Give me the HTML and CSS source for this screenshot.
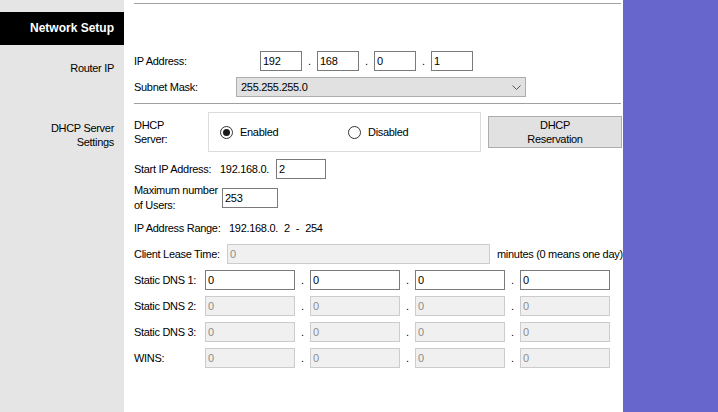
FILE: index.html
```html
<!DOCTYPE html>
<html lang="en">
<head>
<meta charset="utf-8">
<title>Network Setup</title>
<link rel="stylesheet" href="styles.css">
</head>
<body>
<div class="page">
  <aside class="side">
    <div class="side-title">Network Setup</div>
    <div class="side-label side-router">Router IP</div>
    <div class="side-label side-dhcp">DHCP Server<br>Settings</div>
  </aside>

  <main class="main">
    <div class="rule rule-top"></div>

    <div class="row row-ip">
      <span class="lbl w-ip">IP Address:</span>
      <input class="field oct" value="192"><span class="dot">.</span>
      <input class="field oct" value="168"><span class="dot">.</span>
      <input class="field oct" value="0"><span class="dot">.</span>
      <input class="field oct" value="1">
    </div>

    <div class="row row-mask">
      <span class="lbl w-mask">Subnet Mask:</span>
      <div class="select">
        <span>255.255.255.0</span>
        <svg class="chev" width="9" height="5" viewBox="0 0 9 5"><polyline points="0.5,0.5 4.5,4.5 8.5,0.5" fill="none" stroke="#555" stroke-width="1"/></svg>
      </div>
    </div>

    <div class="rule rule-mid"></div>

    <div class="row row-dhcp">
      <span class="lbl lbl-2 w-dhcp">DHCP<br>Server:</span>
      <div class="radio-box">
        <label class="opt"><span class="radio checked"></span><span>Enabled</span></label>
        <label class="opt"><span class="radio"></span><span>Disabled</span></label>
      </div>
      <button class="btn" type="button">DHCP<br>Reservation</button>
    </div>

    <div class="row row-start">
      <span class="lbl w-start">Start IP Address:</span>
      <span class="w-prefix">192.168.0.</span>
      <input class="field f-start" value="2">
    </div>

    <div class="row row-max">
      <span class="lbl lbl-2b w-max">Maximum number<br>of Users:</span>
      <input class="field f-max" value="253">
    </div>

    <div class="row row-range">
      <span class="lbl w-range">IP Address Range:</span>
      <span>192.168.0.</span><span class="r-a">2</span><span class="r-b">-</span><span class="r-c">254</span>
    </div>

    <div class="row row-lease">
      <span class="lbl w-lease">Client Lease Time:</span>
      <input class="field f-lease" value="0" disabled>
      <span class="lease-note">minutes (0 means one day)</span>
    </div>

    <div class="row row-dns first">
      <span class="lbl w-dns">Static DNS 1:</span>
      <input class="field f-dns" value="0"><span class="dot">.</span>
      <input class="field f-dns" value="0"><span class="dot">.</span>
      <input class="field f-dns" value="0"><span class="dot">.</span>
      <input class="field f-dns" value="0">
    </div>
    <div class="row row-dns">
      <span class="lbl w-dns">Static DNS 2:</span>
      <input class="field f-dns" value="0" disabled><span class="dot">.</span>
      <input class="field f-dns" value="0" disabled><span class="dot">.</span>
      <input class="field f-dns" value="0" disabled><span class="dot">.</span>
      <input class="field f-dns" value="0" disabled>
    </div>
    <div class="row row-dns">
      <span class="lbl w-dns">Static DNS 3:</span>
      <input class="field f-dns" value="0" disabled><span class="dot">.</span>
      <input class="field f-dns" value="0" disabled><span class="dot">.</span>
      <input class="field f-dns" value="0" disabled><span class="dot">.</span>
      <input class="field f-dns" value="0" disabled>
    </div>
    <div class="row row-dns">
      <span class="lbl w-dns">WINS:</span>
      <input class="field f-dns" value="0" disabled><span class="dot">.</span>
      <input class="field f-dns" value="0" disabled><span class="dot">.</span>
      <input class="field f-dns" value="0" disabled><span class="dot">.</span>
      <input class="field f-dns" value="0" disabled>
    </div>
  </main>

  <div class="purple"></div>
</div>
</body>
</html>
```

FILE: styles.css
```css
* { box-sizing: border-box; }

body {
  margin: 0;
  background: #fff;
  color: #000;
  font-family: "Liberation Sans", Arial, sans-serif;
  font-size: 11px;
  letter-spacing: -0.3px;
}

.page {
  display: flex;
  height: 412px;
  overflow: hidden;
}

/* sidebar */
.side {
  width: 124px;
  flex: none;
  background: #e5e5e5;
}
.side-title {
  margin-top: 12px;
  height: 33px;
  line-height: 33px;
  background: #000;
  color: #fff;
  font-weight: bold;
  font-size: 12px;
  letter-spacing: 0;
  text-align: right;
  padding-right: 10px;
}
.side-label {
  text-align: right;
  padding-right: 10px;
  line-height: 14px;
}
.side-router { margin-top: 16px; }
.side-dhcp { margin-top: 46px; }

/* main */
.main {
  width: 499px;
  flex: none;
  padding: 0 2px 0 10px;
}
.rule {
  height: 1px;
  background: #a0a0a0;
}
.rule-top { margin-top: 3px; }
.rule-mid { margin-top: 6px; }

.row {
  display: flex;
  align-items: center;
  height: 20px;
  white-space: nowrap;
}
.lbl { flex: none; }
.lbl-2 { line-height: 14px; }
.lbl-2b { line-height: 15px; }

.field {
  flex: none;
  height: 20px;
  margin: 0;
  padding: 0 2px;
  border: 1px solid #7a7a7a;
  background: #fff;
  color: #000;
  font: inherit;
  letter-spacing: inherit;
  outline: none;
}
.field:disabled {
  background: #f0f0f0;
  border-color: #cccccc;
  color: #8c8c8c;
  -webkit-text-fill-color: #8c8c8c;
  opacity: 1;
}
.dot {
  flex: none;
  width: 15px;
  text-align: center;
}

.row-ip { margin-top: 47px; }
.w-ip { width: 126px; }
.oct { width: 42px; }

.row-mask { margin-top: 6px; }
.w-mask { width: 102px; }
.select {
  width: 290px;
  height: 20px;
  border: 1px solid #adadad;
  background: #e1e1e1;
  display: flex;
  align-items: center;
  justify-content: space-between;
  padding: 0 4px 0 4px;
}
.chev { display: block; }

.row-dhcp {
  margin-top: 8px;
  height: 40px;
  align-items: flex-start;
}
.w-dhcp { width: 74px; margin-top: 6px; }
.radio-box {
  flex: none;
  width: 273px;
  height: 40px;
  border: 1px solid #dcdcdc;
  display: flex;
  align-items: center;
  padding-left: 11px;
}
.opt {
  display: flex;
  align-items: center;
  gap: 7px;
  width: 128px;
}
.radio {
  width: 13px;
  height: 13px;
  border: 1px solid #333;
  border-radius: 50%;
  background: #fff;
  display: flex;
  align-items: center;
  justify-content: center;
}
.radio.checked::after {
  content: "";
  width: 7px;
  height: 7px;
  border-radius: 50%;
  background: #1a1a1a;
}
.btn {
  flex: none;
  margin: 4px 0 0 7px;
  width: 134px;
  height: 32px;
  padding: 0;
  border: 1px solid #adadad;
  background: #e1e1e1;
  color: #000;
  font: inherit;
  letter-spacing: inherit;
  line-height: 14px;
  text-align: center;
}

.row-start { margin-top: 7px; }
.w-start { width: 86px; }
.w-prefix { flex: none; width: 56px; }
.f-start { width: 50px; }

.row-max { margin-top: 9px; }
.w-max { width: 88px; }
.f-max { width: 56px; }

.row-range { margin-top: 10px; }
.w-range { width: 95px; }
.r-a { margin-left: 6px; }
.r-b { margin-left: 6px; }
.r-c { margin-left: 6px; }

.row-lease { margin-top: 6px; }
.w-lease { width: 93px; }
.f-lease { width: 263px; }
.lease-note { margin-left: 7px; }

.row-dns { margin-top: 6px; }
.w-dns { width: 71px; }
.f-dns { width: 90px; }

.purple {
  flex: 1;
  background: #6666cc;
}
```
